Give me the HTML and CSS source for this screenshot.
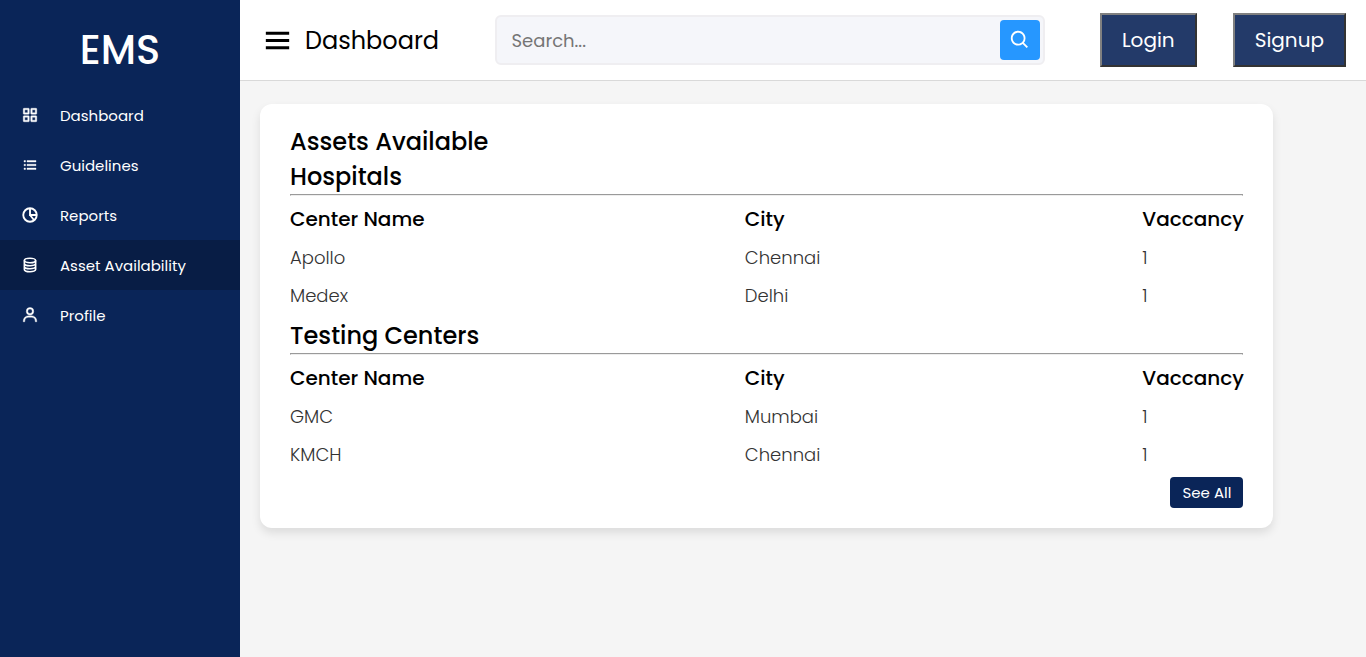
FILE: index.html
```html
<!DOCTYPE html>
<html lang="en">
<head>
<meta charset="utf-8">
<meta name="viewport" content="width=device-width, initial-scale=1">
<title>EMS Dashboard</title>
<link rel="stylesheet" href="styles.css">
</head>
<body>
<div class="app">
  <aside class="sidebar">
    <div class="logo">EMS</div>
    <nav class="nav">
      <a class="nav-link" href="#">
        <svg class="nav-icon" viewBox="0 0 24 24" fill="currentColor" stroke="currentColor" stroke-width="0.500" aria-hidden="true"><path d="M10 3H4a1 1 0 0 0-1 1v6a1 1 0 0 0 1 1h6a1 1 0 0 0 1-1V4a1 1 0 0 0-1-1zM9 9H5V5h4v4zm11-6h-6a1 1 0 0 0-1 1v6a1 1 0 0 0 1 1h6a1 1 0 0 0 1-1V4a1 1 0 0 0-1-1zm-1 6h-4V5h4v4zm-9 4H4a1 1 0 0 0-1 1v6a1 1 0 0 0 1 1h6a1 1 0 0 0 1-1v-6a1 1 0 0 0-1-1zm-1 6H5v-4h4v4zm11-6h-6a1 1 0 0 0-1 1v6a1 1 0 0 0 1 1h6a1 1 0 0 0 1-1v-6a1 1 0 0 0-1-1zm-1 6h-4v-4h4v4z"/></svg>
        <span>Dashboard</span>
      </a>
      <a class="nav-link" href="#">
        <svg class="nav-icon" viewBox="0 0 24 24" fill="currentColor" stroke="currentColor" stroke-width="0.500" aria-hidden="true"><path d="M4 6h2v2H4zm0 5h2v2H4zm0 5h2v2H4zM8 6h12v2H8zm0 5h12v2H8zm0 5h12v2H8z"/></svg>
        <span>Guidelines</span>
      </a>
      <a class="nav-link" href="#">
        <svg class="nav-icon" viewBox="0 0 24 24" fill="none" stroke="currentColor" stroke-width="2.500" aria-hidden="true"><circle cx="12" cy="12" r="9"/><path d="M12 3v9h9M12 12l5.500 7"/></svg>
        <span>Reports</span>
      </a>
      <a class="nav-link active" href="#" aria-current="page">
        <svg class="nav-icon" viewBox="0 0 24 24" fill="none" stroke="currentColor" stroke-width="2.200" aria-hidden="true"><ellipse cx="12" cy="6" rx="7.500" ry="3"/><path d="M4.500 6v12c0 1.700 3.400 3 7.500 3s7.500-1.300 7.500-3V6M4.500 10c0 1.700 3.400 3 7.500 3s7.500-1.300 7.500-3M4.500 14c0 1.700 3.400 3 7.500 3s7.500-1.300 7.500-3"/></svg>
        <span>Asset Availability</span>
      </a>
      <a class="nav-link" href="#">
        <svg class="nav-icon" viewBox="0 0 24 24" fill="currentColor" stroke="currentColor" stroke-width="0.500" aria-hidden="true"><path d="M12 2a5 5 0 1 0 5 5 5 5 0 0 0-5-5zm0 8a3 3 0 1 1 3-3 3 3 0 0 1-3 3zm9 11v-1a7 7 0 0 0-7-7h-4a7 7 0 0 0-7 7v1h2v-1a5 5 0 0 1 5-5h4a5 5 0 0 1 5 5v1z"/></svg>
        <span>Profile</span>
      </a>
    </nav>
  </aside>
  <div class="page">
    <header class="topbar">
      <div class="page-title">
        <button class="menu-button" type="button" aria-label="Toggle menu">
          <svg class="menu-icon" viewBox="0 0 24 24" fill="currentColor" aria-hidden="true"><path d="M4 6h16v2H4zm0 5h16v2H4zm0 5h16v2H4z"/></svg>
        </button>
        <span>Dashboard</span>
      </div>
      <form class="search">
        <input class="search-input" type="text" placeholder="Search..." aria-label="Search">
        <button class="search-button" type="button" aria-label="Search">
          <svg class="search-icon" viewBox="0 0 24 24" fill="currentColor" aria-hidden="true"><path d="M10 18a7.952 7.952 0 0 0 4.897-1.688l4.396 4.396 1.414-1.414-4.396-4.396A7.952 7.952 0 0 0 18 10c0-4.411-3.589-8-8-8s-8 3.589-8 8 3.589 8 8 8zm0-14c3.309 0 6 2.691 6 6s-2.691 6-6 6-6-2.691-6-6 2.691-6 6-6z"/></svg>
        </button>
      </form>
      <div class="account">
        <button class="account-button" type="button">Login</button>
        <button class="account-button" type="button">Signup</button>
      </div>
    </header>
    <main class="content">
      <section class="card">
        <h1 class="heading">Assets Available</h1>
        <h2 class="heading">Hospitals</h2>
        <hr class="rule">
        <table class="assets">
          <thead><tr><th class="name">Center Name</th><th class="city">City</th><th>Vaccancy</th></tr></thead>
          <tbody>
            <tr><td>Apollo</td><td>Chennai</td><td>1</td></tr>
            <tr><td>Medex</td><td>Delhi</td><td>1</td></tr>
          </tbody>
        </table>
        <h2 class="heading">Testing Centers</h2>
        <hr class="rule">
        <table class="assets">
          <thead><tr><th class="name">Center Name</th><th class="city">City</th><th>Vaccancy</th></tr></thead>
          <tbody>
            <tr><td>GMC</td><td>Mumbai</td><td>1</td></tr>
            <tr><td>KMCH</td><td>Chennai</td><td>1</td></tr>
          </tbody>
        </table>
        <div class="card-footer"><a class="see-all" href="#">See All</a></div>
      </section>
    </main>
  </div>
</div>
</body>
</html>
```
FILE: styles.css
```css
* {
  box-sizing: border-box;
  margin: 0;
  padding: 0;
  font-family: Poppins, Inter, sans-serif;
}

.app {
  display: flex;
  min-height: 100vh;
  background: #f5f5f5;
}

.sidebar {
  flex: 0 0 240px;
  background: #0a2558;
  color: #fff;
}

.logo {
  padding-top: 10px;
  font-size: 40px;
  font-weight: 500;
  line-height: 80px;
  text-align: center;
}

.nav-link {
  display: flex;
  align-items: center;
  height: 50px;
  color: #fff;
  font-size: 15px;
  text-decoration: none;
}

.nav-link.active {
  background: #081d45;
}

.nav-icon {
  width: 18px;
  height: 18px;
  margin: 0 21px;
}

.page {
  flex: 1;
  min-width: 0;
}

.topbar {
  display: flex;
  align-items: center;
  justify-content: space-between;
  height: 81px;
  padding: 0 20px;
  background: #fff;
  border-bottom: 1px solid #d9d9d9;
}

.page-title {
  display: flex;
  align-items: center;
  gap: 10px;
  font-size: 24px;
}

.menu-button {
  display: flex;
  border: 0;
  background: none;
}

.menu-icon {
  width: 35px;
  height: 35px;
}

.search {
  display: flex;
  align-items: center;
  flex: 0 1 550px;
  height: 50px;
  padding-right: 3px;
  background: #f5f6fa;
  border: 2px solid #efeef1;
  border-radius: 6px;
}

.search-input {
  flex: 1;
  min-width: 0;
  height: 100%;
  padding: 0 15px;
  border: 0;
  outline: 0;
  background: none;
  font-size: 18px;
}

.search-input::placeholder {
  color: #757575;
}

.search-button {
  display: flex;
  align-items: center;
  justify-content: center;
  width: 40px;
  height: 40px;
  border: 0;
  border-radius: 4px;
  background: #2697ff;
  color: #fff;
}

.search-icon {
  width: 22px;
  height: 22px;
}

.account {
  display: flex;
  gap: 36px;
}

.account-button {
  height: 54px;
  padding: 0 20px;
  background: #233a69;
  border: 2px solid;
  border-color: #808080 #333 #333 #808080;
  color: #fff;
  font-size: 20px;
}

.content {
  padding: 23px 0 20px;
}

.card {
  width: 90%;
  margin-left: 20px;
  padding: 20px 30px;
  background: #fff;
  border-radius: 12px;
  box-shadow: 0 5px 10px rgba(0, 0, 0, 0.1);
}

.heading {
  font-size: 24px;
  font-weight: 500;
  line-height: 35px;
}

.rule {
  border: 1px solid #9a9a9a;
  border-bottom-color: #eee;
}

.assets {
  width: 100%;
  margin: 4px 0;
  border-collapse: collapse;
  table-layout: fixed;
}

.assets th,
.assets td {
  height: 38px;
  text-align: left;
  white-space: nowrap;
}

.assets th {
  font-size: 20px;
  font-weight: 500;
}

.assets td {
  color: #333;
  font-size: 18px;
  font-weight: 300;
}

.name {
  width: 47.7%;
}

.city {
  width: 41.7%;
}

.card-footer {
  display: flex;
  justify-content: flex-end;
}

.see-all {
  padding: 0 12px;
  border-radius: 4px;
  background: #0a2558;
  color: #fff;
  font-size: 15px;
  line-height: 31px;
  text-decoration: none;
}
```
